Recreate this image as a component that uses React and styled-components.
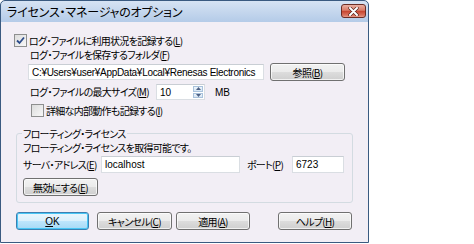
import React from 'react'
import styled, { createGlobalStyle } from 'styled-components'

const GlobalStyle = createGlobalStyle`
body {
  margin: 0;
  background: #fff;
}
`

const jp = `"Noto Sans CJK JP", "Liberation Sans", sans-serif`

const Window = styled.div`
width: 369px;
height: 243px;
box-sizing: border-box;
border: 1px solid #3a5a80;
border-radius: 5px 5px 0 0;
background: linear-gradient(#d6e3f3, #b4cbe8 21px, #f2eef5 21px);
display: flex;
flex-direction: column;
font-family: ${jp};
font-size: 10px;
letter-spacing: -0.7px;
font-feature-settings: "palt";
color: #000;
`

const TitleBar = styled.div`
height: 21px;
display: flex;
align-items: center;
justify-content: space-between;
padding: 0 2px 0 6px;
`

const Title = styled.div`
font-size: 12px;
letter-spacing: -0.2px;
`

const CloseBtn = styled.div`
width: 25px;
height: 14px;
margin-top: -1px;
box-sizing: border-box;
border: 1px solid #6b2d24;
border-radius: 3px;
background: linear-gradient(#eab0a2, #d97a66 45%, #c6422c 50%, #d9735f 85%, #e99c8a);
display: flex;
align-items: center;
justify-content: center;
`

const Content = styled.div`
flex: 1;
display: flex;
flex-direction: column;
padding: 0 14px 0 13px;
`

const Row = styled.div`
display: flex;
align-items: center;
height: ${p => p.h || 14}px;
margin-top: ${p => p.mt || 0}px;
padding-left: ${p => p.pl || 0}px;
`

const Label = styled.span`
white-space: nowrap;
line-height: 14px;
width: ${p => (p.w ? `${p.w}px` : 'auto')};
flex: none;
`

const Latin = styled.span`
font-family: "Liberation Sans", Arial, sans-serif;
letter-spacing: 0;
`

const Box = styled.div`
width: 13px;
height: 13px;
box-sizing: border-box;
border: 1px solid #8e8f8f;
background: linear-gradient(135deg, #dcdcdc, #f8f8f8);
display: flex;
align-items: center;
justify-content: center;
margin-right: 2px;
flex: none;
`

const Input = styled.div`
width: ${p => p.w}px;
height: ${p => p.h || 17}px;
box-sizing: border-box;
border: 1px solid #dadee3;
border-top-color: #c9ced4;
background: #fff;
display: flex;
align-items: center;
padding-left: 3px;
font-family: "Liberation Sans", Arial, sans-serif;
font-size: 10px;
letter-spacing: ${p => p.ls || 0}px;
margin-right: ${p => p.mr || 0}px;
flex: none;
white-space: pre;
overflow: hidden;
position: relative;
`

const Spin = styled.div`
position: absolute;
right: 1px;
top: 1px;
bottom: 1px;
width: 10px;
display: flex;
flex-direction: column;
gap: 1px;
`

const SpinHalf = styled.div`
flex: 1;
border: 1px solid #a9c2dc;
background: linear-gradient(#eef5fb, #d5e5f3);
display: flex;
align-items: center;
justify-content: center;
`

const Button = styled.div`
width: ${p => p.w || 74}px;
height: 18px;
box-sizing: border-box;
border: 1px solid ${p => (p.def ? '#3c7fb1' : '#707070')};
border-radius: 3px;
background: ${p =>
  p.def
    ? 'linear-gradient(#eaf6fd, #d9f0fc 50%, #bee6fd 50%, #a7d9f5)'
    : 'linear-gradient(#f2f2f2, #ebebeb 50%, #dddddd 50%, #cfcfcf)'};
box-shadow: inset 0 0 0 1px ${p => (p.def ? '#48c6f5' : 'rgba(255,255,255,0.7)')};
display: flex;
align-items: center;
justify-content: center;
margin-left: ${p => p.ml || 0}px;
flex: none;
white-space: nowrap;
`

const Group = styled.fieldset`
margin: 10px 1px 0 2px;
padding: 0 0 0 6px;
min-width: 0;
height: 76px;
box-sizing: border-box;
border: 1px solid #d3dbe1;
border-radius: 3px;
display: flex;
flex-direction: column;
`

const Legend = styled.legend`
padding: 0 1px;
margin-left: -1px;
line-height: 13px;
`

const Buttons = styled.div`
display: flex;
margin-top: 9px;
margin-left: 2px;
`

const Check = () => (
  <svg width="9" height="9" viewBox="0 0 9 9">
    <path d="M1 4.5 L3.5 7 L8 1.5" fill="none" stroke="#2c4b8a" strokeWidth="1.8" />
  </svg>
)

const Arrow = ({ up }) => (
  <svg width="5" height="3" viewBox="0 0 5 3">
    <path d={up ? 'M0 3 L2.5 0 L5 3Z' : 'M0 0 L2.5 3 L5 0Z'} fill="#4d6185" />
  </svg>
)

const Cross = () => (
  <svg width="11" height="9" viewBox="0 0 11 9">
    <path d="M2 1 L9 8 M9 1 L2 8" stroke="#4a1d16" strokeWidth="3.2" strokeLinecap="round" />
    <path d="M2 1 L9 8 M9 1 L2 8" stroke="#fff" strokeWidth="2" strokeLinecap="round" />
  </svg>
)

const App = () => {
  return (
    <>
      <GlobalStyle />
      <Window>
        <TitleBar>
          <Title>ライセンス・マネージャのオプション</Title>
          <CloseBtn><Cross /></CloseBtn>
        </TitleBar>
        <Content>
          <Row h={13} mt={12}>
            <Box><Check /></Box>
            <Label>ログ・ファイルに利用状況を記録する(<u>L</u>)</Label>
          </Row>
          <Row mt={1} pl={16}>
            <Label>ログ・ファイルを保存するフォルダ(<u>F</u>)</Label>
          </Row>
          <Row h={18} mt={1} pl={14}>
            <Input w={236} h={16} mr={6} ls={-0.3}>{'C:¥Users¥user¥AppData¥Local¥Renesas Electronics'}</Input>
            <Button w={75}>参照(<u>B</u>)</Button>
          </Row>
          <Row h={16} mt={3} pl={16}>
            <Label w={126}>ログ・ファイルの最大サイズ(<u>M</u>)</Label>
            <Input w={49} h={16} mr={10}>
              10
              <Spin>
                <SpinHalf><Arrow up /></SpinHalf>
                <SpinHalf><Arrow /></SpinHalf>
              </Spin>
            </Input>
            <Label><Latin>MB</Latin></Label>
          </Row>
          <Row h={13} mt={4} pl={17}>
            <Box />
            <Label>詳細な内部動作も記録する(<u>I</u>)</Label>
          </Row>
          <Group>
            <Legend>フローティング・ライセンス</Legend>
            <Row mt={1}>
              <Label>フローティング・ライセンスを取得可能です。</Label>
            </Row>
            <Row h={17} mt={1}>
              <Label w={78}>サーバ・アドレス(<u>E</u>)</Label>
              <Input w={139} mr={7}>localhost</Input>
              <Label w={45}>ポート(<u>P</u>)</Label>
              <Input w={52}>6723</Input>
            </Row>
            <Row h={18} mt={5}>
              <Button w={75}>無効にする(<u>E</u>)</Button>
            </Row>
          </Group>
          <Buttons>
            <Button w={73} def><Latin><u>O</u>K</Latin></Button>
            <Button w={75} ml={8}>キャンセル(<u>C</u>)</Button>
            <Button w={74} ml={4}>適用(<u>A</u>)</Button>
            <Button w={74} ml={28}>ヘルプ(<u>H</u>)</Button>
          </Buttons>
        </Content>
      </Window>
    </>
  )
}

export default App
